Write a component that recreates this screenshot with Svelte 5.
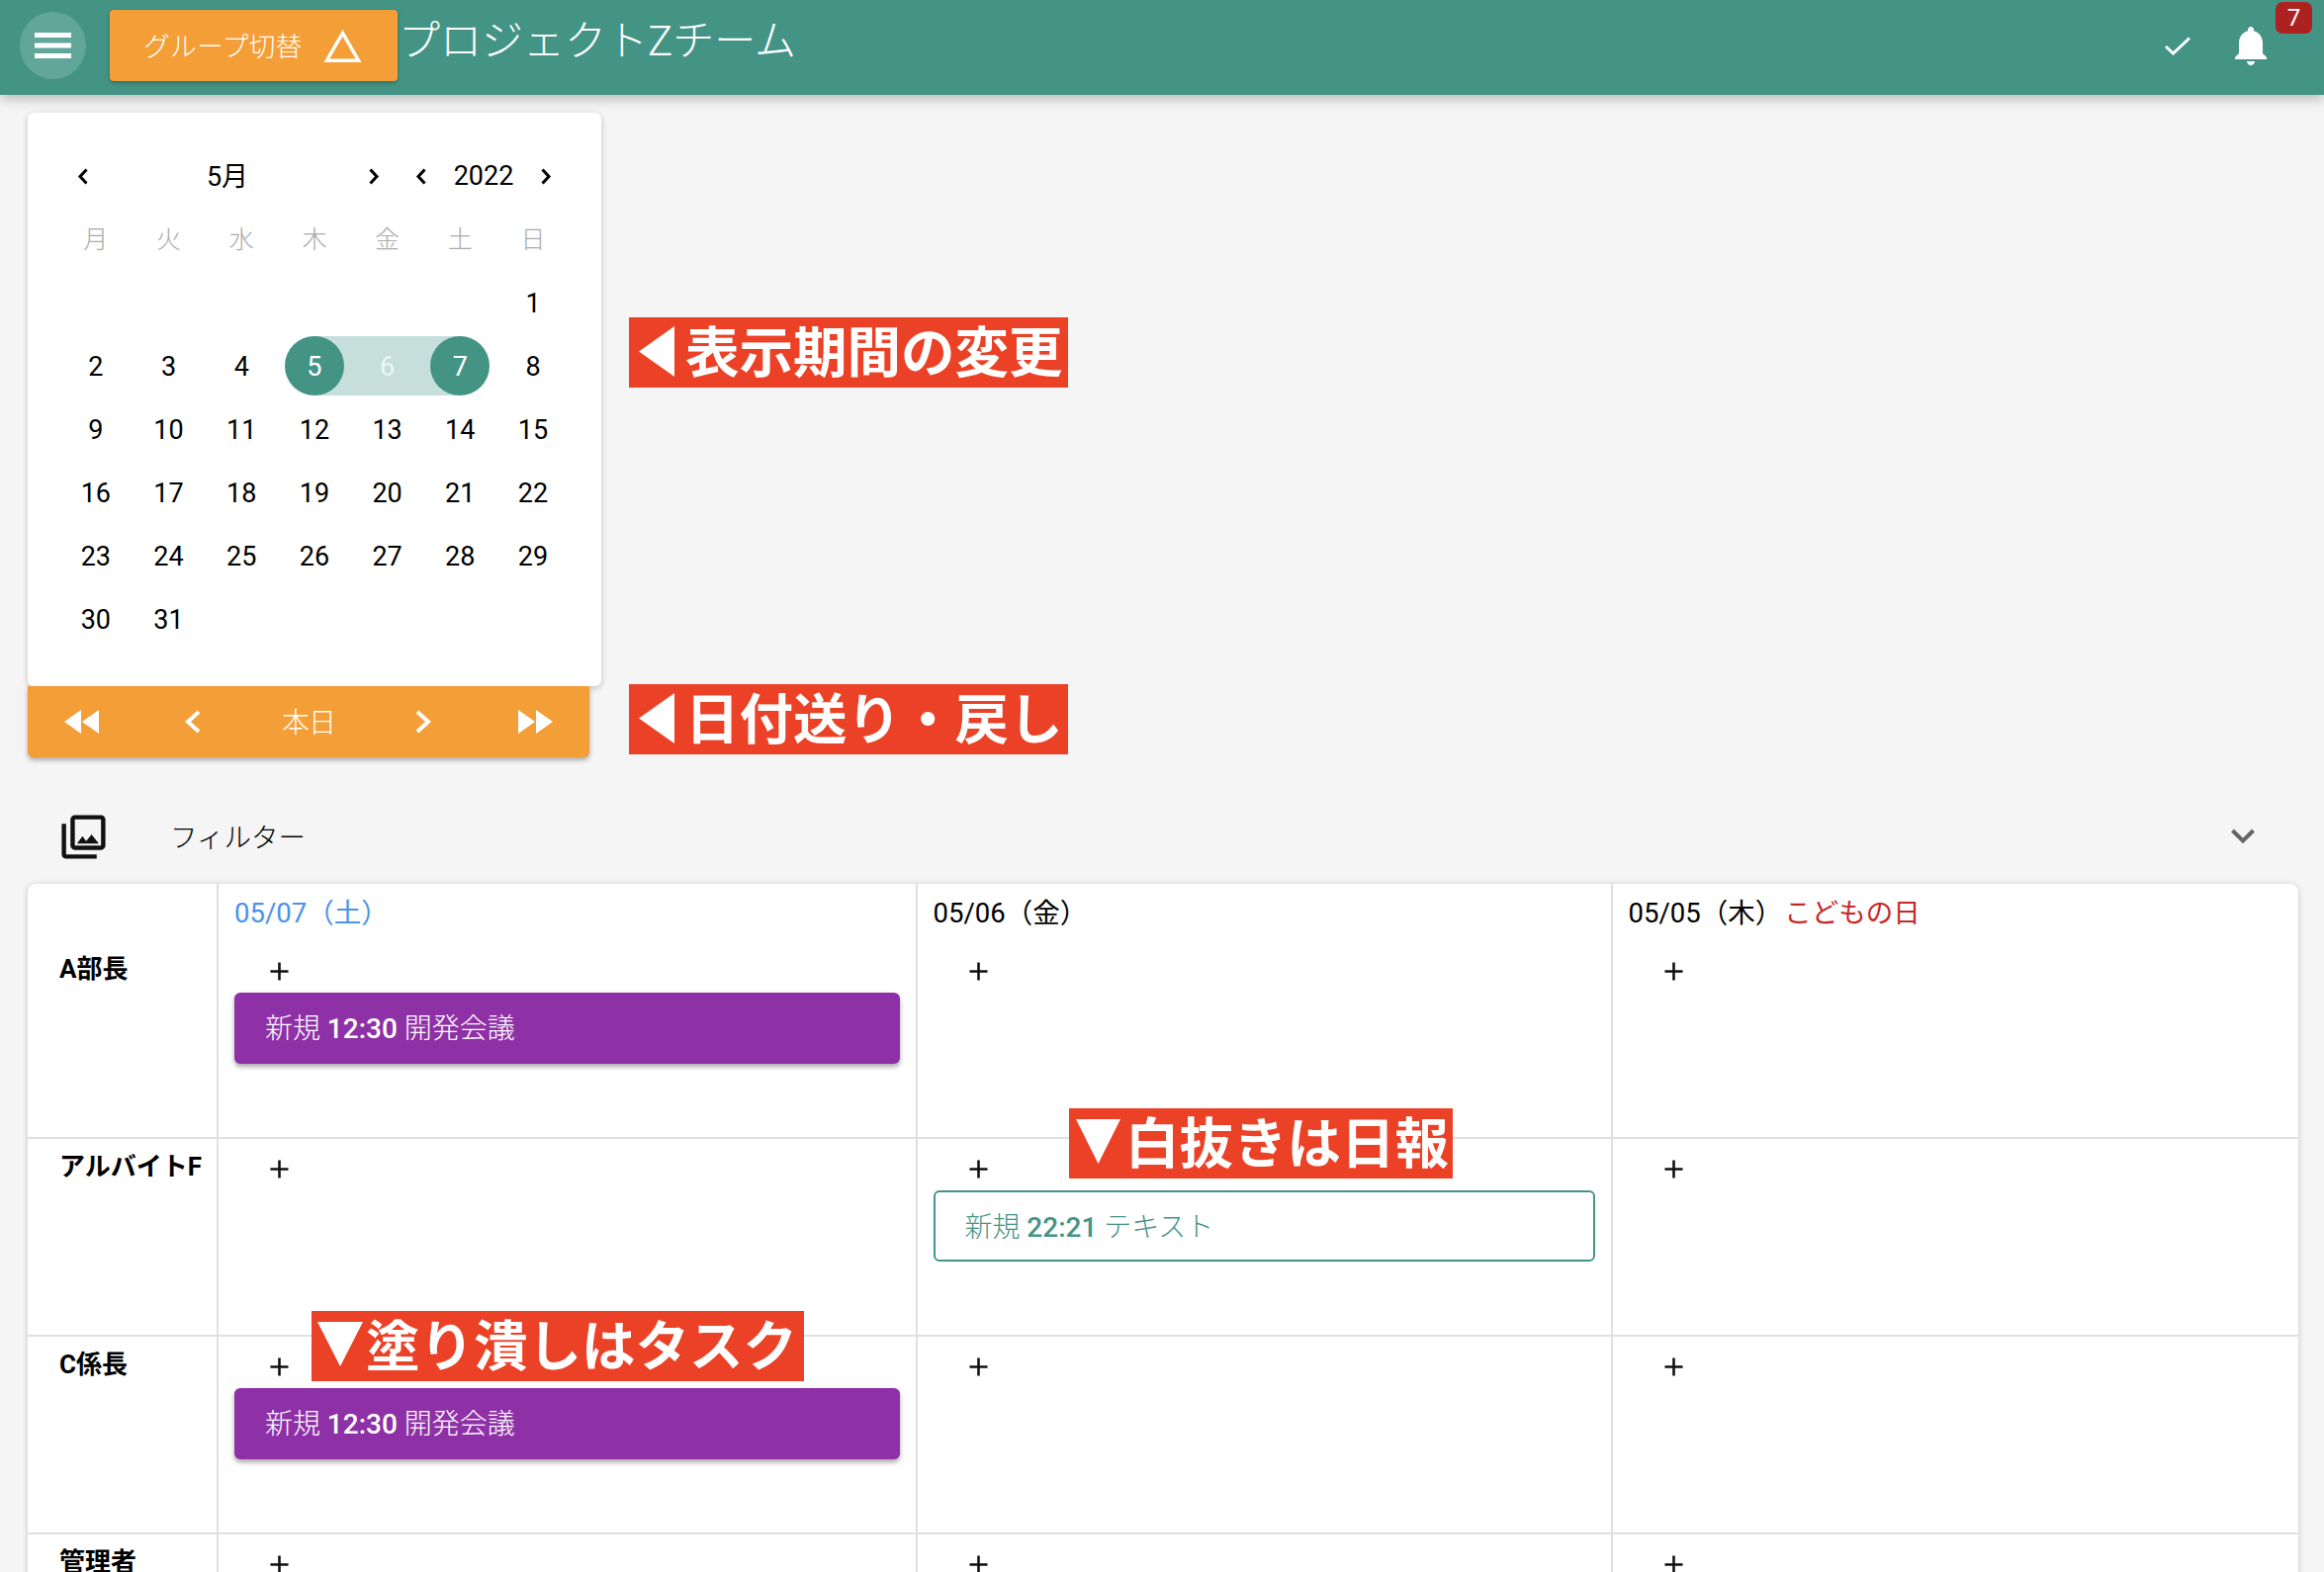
<script lang="ts">
	const weekdays = ['月', '火', '水', '木', '金', '土', '日'];
	// May 2022 starts on a Sunday
	const days = [...Array(6).fill(null), ...Array.from({ length: 31 }, (_, i) => i + 1)];

	function dayClass(d: number | null) {
		if (d === 5) return 'day start';
		if (d === 6) return 'day mid';
		if (d === 7) return 'day end';
		return 'day';
	}

	const rows = [
		{ name: 'A部長', events: [{ type: 'task', label: '新規', time: '12:30', text: '開発会議' }, null, null] },
		{ name: 'アルバイトF', events: [null, { type: 'report', label: '新規', time: '22:21', text: 'テキスト' }, null] },
		{ name: 'C係長', events: [{ type: 'task', label: '新規', time: '12:30', text: '開発会議' }, null, null] },
		{ name: '管理者', events: [null, null, null] }
	];
</script>

<div class="page">
	<header class="appbar">
		<button type="button" class="menu-btn" aria-label="menu">
			<svg width="37" height="26" viewBox="0 0 37 26" fill="#fff"><rect y="0" width="37" height="5" /><rect y="10.500" width="37" height="5" /><rect y="21" width="37" height="5" /></svg>
		</button>
		<button type="button" class="group-btn">
			<span>グループ切替</span>
			<svg width="39" height="33" viewBox="1 2 22 19" fill="#fff"><path fill-rule="evenodd" d="M12,2L1,21H23ZM12,6L19.530,19H4.470Z" /></svg>
		</button>
		<h1 class="title">プロジェクトZチーム</h1>
		<div class="appbar-right">
			<svg class="check" width="26" height="19" viewBox="0 0 26 19" fill="none" stroke="#fff" stroke-width="3"><polyline points="1,10 8.500,17 25,1.500" /></svg>
			<svg class="bell" width="48" height="48" viewBox="0 0 24 24" fill="#fff"><path d="M12 22c1.100 0 2-.9 2-2h-4c0 1.100.9 2 2 2zm6-6v-5c0-3.070-1.640-5.640-4.500-6.320V4c0-.83-.67-1.500-1.500-1.500s-1.500.67-1.500 1.500v.68C7.630 5.360 6 7.920 6 11v5l-2 2v1h16v-1l-2-2z" /></svg>
			<span class="badge">7</span>
		</div>
	</header>

	<main class="content">
		<section class="calendar">
			<div class="cal-head">
				<div class="cal-month">
					<span class="nav"><svg width="12" height="17" viewBox="0 0 12 17" fill="none" stroke="#000" stroke-width="3"><polyline points="9.500,1.500 3,8.500 9.500,15.500" /></svg></span>
					<span class="month-label">5月</span>
					<span class="nav"><svg width="12" height="17" viewBox="0 0 12 17" fill="none" stroke="#000" stroke-width="3"><polyline points="2.500,1.500 9,8.500 2.500,15.500" /></svg></span>
				</div>
				<div class="cal-year">
					<span class="nav"><svg width="12" height="17" viewBox="0 0 12 17" fill="none" stroke="#000" stroke-width="3"><polyline points="9.500,1.500 3,8.500 9.500,15.500" /></svg></span>
					<span>2022</span>
					<span class="nav"><svg width="12" height="17" viewBox="0 0 12 17" fill="none" stroke="#000" stroke-width="3"><polyline points="2.500,1.500 9,8.500 2.500,15.500" /></svg></span>
				</div>
			</div>
			<div class="cal-grid">
				{#each weekdays as w}
					<div class="weekday">{w}</div>
				{/each}
				{#each days as d}
					<div class={dayClass(d)}>
						{#if d}<span>{d}</span>{/if}
					</div>
				{/each}
			</div>
		</section>

		<div class="date-nav">
			<svg width="35" height="24" viewBox="2.500 6 17.500 12" fill="#fff"><path d="M11.500,12L20,18V6M11,18V6L2.500,12L11,18Z" /></svg>
			<svg class="step-prev" width="16" height="24" viewBox="0 0 16 24" fill="none" stroke="#fff" stroke-width="4"><polyline points="14,2 3,12 14,22" /></svg>
			<span class="today">本日</span>
			<svg class="step-next" width="16" height="24" viewBox="0 0 16 24" fill="none" stroke="#fff" stroke-width="4"><polyline points="2,2 13,12 2,22" /></svg>
			<svg width="35" height="24" viewBox="4 6 17.500 12" fill="#fff"><path d="M13,6V18L21.500,12M4,18L12.500,12L4,6V18Z" /></svg>
		</div>

		<div class="filter">
			<svg class="filter-icon" width="53" height="53" viewBox="0 0 24 24" fill="#111"><path d="M20 4v12H8V4h12m0-2H8c-1.100 0-2 .9-2 2v12c0 1.100.9 2 2 2h12c1.100 0 2-.9 2-2V4c0-1.100-.9-2-2-2zm-8.500 9.670l1.690 2.260 2.480-3.100L19 15H9zM2 6v14c0 1.100.9 2 2 2h14v-2H4V6H2z" /></svg>
			<span class="filter-label">フィルター</span>
			<svg class="filter-chevron" width="24" height="16" viewBox="0 0 24 16" fill="none" stroke="#666" stroke-width="4"><polyline points="1.500,2 12,12.500 22.500,2" /></svg>
		</div>

		<section class="board">
			<div class="board-head">
				<div></div>
				<div class="date-cell today-col">05/07（土）</div>
				<div class="date-cell">05/06（金）</div>
				<div class="date-cell">05/05（木）<span class="holiday">こどもの日</span></div>
			</div>
			{#each rows as row}
				<div class="board-row">
					<div class="name">{row.name}</div>
					{#each row.events as ev}
						<div class="cell">
							<div class="add">
								<svg width="31" height="31" viewBox="0 0 24 24" fill="#111"><path d="M19,13H13V19H11V13H5V11H11V5H13V11H19V13Z" /></svg>
							</div>
							{#if ev}
								<div class="event {ev.type}">{ev.label} <b>{ev.time}</b> {ev.text}</div>
							{/if}
						</div>
					{/each}
				</div>
			{/each}
		</section>
	</main>

	<div class="note note-period">
		<svg width="36" height="51" viewBox="0 0 36 51" fill="#fff"><polygon points="36,0 0,25.500 36,51" /></svg>
		<span>表示期間の変更</span>
	</div>
	<div class="note note-nav">
		<svg width="36" height="51" viewBox="0 0 36 51" fill="#fff"><polygon points="36,0 0,25.500 36,51" /></svg>
		<span>日付送り・戻し</span>
	</div>
	<div class="note note-report">
		<svg width="45" height="45" viewBox="0 0 45 45" fill="#fff"><polygon points="0,0 45,0 22.500,45" /></svg>
		<span>白抜きは日報</span>
	</div>
	<div class="note note-task">
		<svg width="46" height="45" viewBox="0 0 46 45" fill="#fff"><polygon points="0,0 46,0 23,45" /></svg>
		<span>塗り潰しはタスク</span>
	</div>
</div>

<style>
	:global(body) {
		margin: 0;
		background: #f5f5f5;
		overflow: hidden;
	}

	.page {
		position: relative;
		width: 2350px;
		height: 1590px;
		overflow: hidden;
		background: #f5f5f5;
		font-family: Roboto, "Noto Sans CJK JP", sans-serif;
		font-size: 27px;
		color: #000;
	}

	.appbar {
		position: relative;
		z-index: 2;
		display: flex;
		align-items: flex-start;
		height: 96px;
		padding-left: 20px;
		box-sizing: border-box;
		background: #449486;
		box-shadow: 0 4px 12px rgba(0, 0, 0, 0.25);
	}

	.menu-btn {
		display: flex;
		align-items: center;
		justify-content: center;
		width: 67px;
		height: 68px;
		margin-top: 12px;
		padding: 0;
		border: none;
		border-radius: 50%;
		background: rgba(255, 255, 255, 0.16);
	}

	.group-btn {
		display: flex;
		align-items: center;
		gap: 22px;
		width: 291px;
		height: 72px;
		margin: 10px 0 0 24px;
		padding: 0 0 0 34px;
		box-sizing: border-box;
		border: none;
		border-radius: 4px;
		background: #f49e37;
		color: #fff;
		font: inherit;
		font-weight: 300;
		box-shadow: 0 2px 4px rgba(0, 0, 0, 0.25);
	}

	.group-btn span {
		padding-bottom: 2px;
	}

	.title {
		margin: 17px 0 0 1px;
		font-size: 42px;
		font-weight: 300;
		line-height: 50px;
		color: #fff;
	}

	.appbar-right {
		position: relative;
		display: flex;
		align-items: flex-start;
		margin-left: auto;
		width: 161px;
	}

	.check {
		margin-top: 37px;
	}

	.bell {
		margin: 22px 0 0 37px;
	}

	.badge {
		position: absolute;
		top: 2px;
		left: 112px;
		width: 37px;
		height: 32px;
		border-radius: 7px;
		background: #ad2121;
		color: #fff;
		font-size: 24px;
		line-height: 32px;
		text-align: center;
	}

	.content {
		display: flex;
		flex-direction: column;
		padding: 18px 26px 0 28px;
	}

	.calendar {
		width: 580px;
		height: 580px;
		padding: 32px 0 0 32px;
		box-sizing: border-box;
		background: #fff;
		border-radius: 6px;
		box-shadow: 0 2px 6px rgba(0, 0, 0, 0.22);
	}

	.cal-head {
		display: flex;
		width: 516px;
		height: 64px;
	}

	.cal-month,
	.cal-year {
		display: flex;
		align-items: center;
		justify-content: space-between;
	}

	.cal-month {
		width: 342px;
	}

	.cal-year {
		width: 174px;
	}

	.month-label {
		padding: 0 2px 4px 0;
	}

	.nav {
		display: flex;
		align-items: center;
		justify-content: center;
		width: 48px;
		height: 48px;
	}

	.cal-grid {
		display: grid;
		grid-template-columns: repeat(7, 73.7px);
		grid-auto-rows: 64px;
	}

	.weekday {
		display: flex;
		align-items: center;
		justify-content: center;
		padding-bottom: 4px;
		box-sizing: border-box;
		color: #aaa;
		font-weight: 300;
		font-size: 25px;
	}

	.day {
		position: relative;
		display: flex;
		align-items: center;
		justify-content: center;
	}

	.day span {
		position: relative;
		padding-top: 2px;
	}

	.start::before,
	.mid::before,
	.end::before {
		content: '';
		position: absolute;
		top: 2px;
		height: 60px;
		background: #c6dfdb;
	}

	.start::before {
		left: 50%;
		right: 0;
	}

	.mid::before {
		left: 0;
		right: 0;
	}

	.end::before {
		left: 0;
		right: 50%;
	}

	.start::after,
	.end::after {
		content: '';
		position: absolute;
		top: 2px;
		left: 6.500px;
		width: 60px;
		height: 60px;
		border-radius: 50%;
		background: #449486;
	}

	.start span,
	.end span {
		z-index: 1;
		color: #fff;
	}

	.mid span {
		color: #eef6f4;
	}

	.date-nav {
		display: flex;
		align-items: center;
		justify-content: space-between;
		width: 568px;
		height: 72px;
		padding: 0 37px;
		box-sizing: border-box;
		background: #f49e37;
		border-radius: 0 0 6px 6px;
		color: #fff;
		box-shadow: 0 3px 5px rgba(0, 0, 0, 0.3);
	}

	.step-prev {
		margin-left: 6px;
	}

	.step-next {
		margin-right: 6px;
	}

	.today {
		padding-bottom: 2px;
		font-size: 28px;
		font-weight: 300;
		letter-spacing: -1px;
	}

	.filter {
		position: relative;
		display: flex;
		align-items: center;
		height: 92px;
		margin-top: 34px;
		padding-left: 30px;
	}

	.filter-label {
		margin-left: 61px;
		padding-bottom: 3px;
		font-size: 27.5px;
		font-weight: 300;
	}

	.filter-chevron {
		margin-left: auto;
		margin-right: 44px;
	}

	.board {
		margin-top: 2px;
		background: #fff;
		border-radius: 8px 8px 0 0;
		box-shadow: 0 1px 6px rgba(0, 0, 0, 0.2);
	}

	.board-head,
	.board-row {
		display: grid;
		grid-template-columns: 191px 706.5px 703px 1fr;
	}

	.board-head {
		height: 56px;
	}

	.board-row {
		height: 200px;
		box-sizing: border-box;
	}

	.board-row + .board-row {
		box-shadow: inset 0 2px 0 #e0e0e0;
	}

	.date-cell {
		padding: 3px 0 0 16px;
		box-sizing: border-box;
		border-left: 2px solid #e0e0e0;
		font-size: 27.5px;
		line-height: 53px;
	}

	.today-col {
		color: #4a92ea;
	}

	.holiday {
		margin-left: 2px;
		color: #c62828;
	}

	.name {
		padding: 10px 0 0 32px;
		font-size: 26px;
		font-weight: 700;
		line-height: 40px;
	}

	.cell {
		padding: 2px 16px 0 16px;
		border-left: 2px solid #e0e0e0;
	}

	.add {
		display: flex;
		align-items: center;
		height: 52px;
		padding: 8px 0 0 30px;
		box-sizing: border-box;
	}

	.event {
		height: 72px;
		padding-left: 31px;
		box-sizing: border-box;
		border-radius: 6px;
		font-size: 28px;
		line-height: 73px;
		font-weight: 300;
	}

	.event b {
		font-weight: 500;
	}

	.task {
		background: #8e30a6;
		color: #fff;
		box-shadow: 0 3px 5px rgba(0, 0, 0, 0.35);
	}

	.report {
		border: 2px solid #449486;
		color: #449486;
		padding-left: 30px;
		line-height: 71px;
		background: #fff;
	}

	.note {
		position: absolute;
		z-index: 3;
		display: flex;
		align-items: flex-start;
		height: 71px;
		box-sizing: border-box;
		background: #eb4126;
		color: #fff;
		font-family: "Noto Sans CJK JP", sans-serif;
		font-size: 54.5px;
		font-weight: 700;
		line-height: 64px;
		white-space: nowrap;
	}

	.note-period {
		left: 636px;
		top: 321px;
		width: 444px;
		padding-left: 10px;
	}

	.note-nav {
		left: 636px;
		top: 692px;
		width: 444px;
		padding-left: 10px;
	}

	.note-period svg,
	.note-nav svg {
		margin: 9px 11px 0 0;
	}

	.note-report {
		left: 1081px;
		top: 1121px;
		width: 388px;
		padding-left: 7px;
	}

	.note-report svg {
		margin: 11px 5px 0 0;
	}

	.note-task {
		left: 315px;
		top: 1326px;
		width: 498px;
		padding-left: 6px;
	}

	.note-task svg {
		margin: 11px 3px 0 0;
	}
</style>
